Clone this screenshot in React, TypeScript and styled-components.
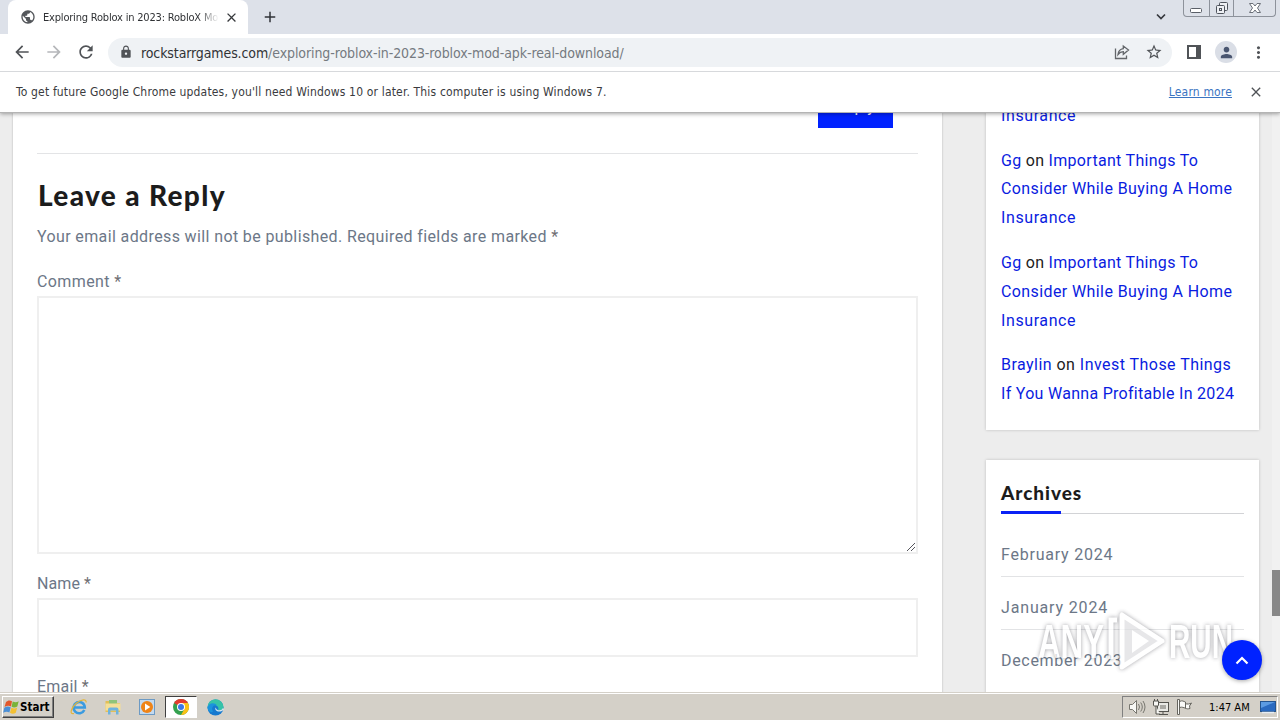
import React from "react";
import styled, { createGlobalStyle } from "styled-components";
import {
  MdAdd,
  MdArrowBack,
  MdArrowForward,
  MdClose,
  MdLock,
  MdMoreVert,
  MdPerson,
  MdPublic,
  MdRefresh,
  MdStarBorder,
} from "react-icons/md";

const GlobalStyle = createGlobalStyle`
  * {
    box-sizing: border-box;
  }
  body {
    margin: 0;
    overflow: hidden;
    background: #ededed;
  }
  svg {
    display: block;
    flex-shrink: 0;
  }
`;

const Screen = styled.div`
  position: relative;
  display: flex;
  flex-direction: column;
  width: 1280px;
  height: 720px;
  overflow: hidden;
  font-family: "Roboto", sans-serif;
`;

/* browser chrome */

const Chrome = styled.header`
  position: relative;
  z-index: 1;
  flex-shrink: 0;
  height: 113px;
  background: #fff;
  border-bottom: 1px solid #b4b4b4;
  box-shadow: 0 1px 4px rgba(0, 0, 0, 0.35);
  font-family: "DejaVu Sans Condensed", "DejaVu Sans", sans-serif;
  color: #3a3b3e;
`;

const TabStrip = styled.div`
  display: flex;
  justify-content: space-between;
  height: 34px;
  background: #dde1e9;
`;

const TabLeft = styled.div`
  display: flex;
  align-items: center;
  padding-left: 8px;
`;

const Tab = styled.div`
  display: flex;
  align-items: center;
  width: 240px;
  height: 34px;
  padding: 0 8px 0 12px;
  background: #fff;
  border-radius: 8px 8px 0 0;
  color: #54575b;
`;

const TabTitle = styled.span`
  width: 175px;
  margin: 1px 6px 0 7px;
  overflow: hidden;
  white-space: nowrap;
  font-size: 11px;
  line-height: 16px;
  letter-spacing: -0.19px;
  color: #303235;
  mask-image: linear-gradient(to right, #000 155px, transparent 176px);
`;

const NewTab = styled.div`
  margin-left: 13px;
  color: #303338;
`;

const TabRight = styled.div`
  display: flex;
  align-items: flex-start;
  padding-right: 4px;
`;

const TabSearch = styled.div`
  margin: 12px 16px 0 0;
`;

const WindowButtons = styled.div`
  display: flex;
  width: 93px;
  height: 17px;
  border: 1px solid #8d929b;
  border-top: 0;
  border-radius: 0 0 4px 4px;
`;

const WindowButton = styled.div<{ $width: number }>`
  display: flex;
  justify-content: center;
  width: ${(props) => props.$width}px;
  height: 16px;
  & + & {
    border-left: 1px solid #8d929b;
  }
`;

const Toolbar = styled.div`
  display: flex;
  align-items: center;
  height: 38px;
  padding: 0 12px 1px 12px;
  border-bottom: 1px solid #d7d9dc;
  color: #505357;
`;

const NavButton = styled.div<{ $faded?: boolean }>`
  width: 18px;
  margin-right: 14px;
  color: ${(props) => (props.$faded ? "#b5b7ba" : "#505357")};
`;

const Omnibox = styled.div`
  display: flex;
  align-items: center;
  flex-shrink: 0;
  width: 1064px;
  height: 29px;
  padding: 0 9px 0 11px;
  border-radius: 15px;
  background: #eff2f5;
`;

const Url = styled.span`
  flex: 1;
  margin: 1px 0 0 8px;
  font-size: 14px;
  line-height: 20px;
  letter-spacing: -0.09px;
  color: #757a80;
`;

const Host = styled.span`
  color: #313336;
  letter-spacing: -0.11px;
`;

const OmniboxActions = styled.div`
  display: flex;
  align-items: center;
  gap: 15px;
`;

const PanelButton = styled.div`
  margin-left: 15px;
`;

const Avatar = styled.div`
  display: flex;
  align-items: center;
  justify-content: center;
  flex-shrink: 0;
  width: 22px;
  height: 22px;
  margin: 0 12px 0 14px;
  border-radius: 50%;
  background: #dadee6;
  color: #4a5670;
`;

const InfoBar = styled.div`
  display: flex;
  align-items: center;
  height: 40px;
  padding: 0 16px;
  font-size: 12px;
  letter-spacing: 0.165px;
`;

const LearnMore = styled.a`
  margin-left: auto;
  margin-right: 16px;
  color: #3b74c2;
  text-decoration: underline;
`;

/* page */

const Page = styled.main`
  display: flex;
  flex: 1;
  min-height: 0;
  overflow: hidden;
  padding-left: 13px;
  background: #ededed;
`;

const Article = styled.section`
  width: 929px;
  height: 620px;
  margin-right: 44px;
  padding: 0 24px;
  background: #fff;
  box-shadow: 0 0 2px rgba(0, 0, 0, 0.25);
`;

const ReplyRow = styled.div`
  display: flex;
  align-items: flex-end;
  justify-content: flex-end;
  height: 15px;
  overflow: hidden;
  padding-right: 25px;
`;

const ReplyButton = styled.div`
  flex-shrink: 0;
  width: 75px;
  height: 42px;
  background: #0022ff;
  color: #fff;
  font-size: 16px;
  line-height: 41px;
  text-align: center;
`;

const Rule = styled.div`
  height: 1px;
  margin: 25px 0 24px;
  background: #e3e4e6;
`;

const Heading = styled.h3`
  margin: 0 0 11px 1px;
  font: 900 28px/34px "Lato", sans-serif;
  letter-spacing: 1.35px;
  color: #1c1c1c;
`;

const Text = styled.div<{ $spacing: number }>`
  font-size: 16px;
  line-height: 28.8px;
  letter-spacing: ${(props) => props.$spacing}px;
  white-space: nowrap;
  color: #6c7787;
`;

const Notes = styled(Text)`
  margin-bottom: 16px;
`;

const Star = styled.span`
  color: #6f6f73;
`;

const Field = styled.div<{ $height: number }>`
  display: flex;
  align-items: flex-end;
  justify-content: flex-end;
  height: ${(props) => props.$height}px;
  margin: -0.5px 0 16px;
  border: 2px solid #efefef;
  background: #fff;
`;

const Sidebar = styled.aside`
  display: flex;
  flex-direction: column;
  gap: 30px;
  width: 273px;
`;

const Widget = styled.div<{ $height: number }>`
  flex-shrink: 0;
  height: ${(props) => props.$height}px;
  padding: 0 15px;
  background: #fff;
  box-shadow: 0 0 3px rgba(0, 0, 0, 0.2);
`;

const CutLine = styled.div`
  display: flex;
  align-items: flex-end;
  height: 17.6px;
  margin-bottom: 16px;
  overflow: hidden;
`;

const Comment = styled.div`
  margin-bottom: 16px;
`;

const Line = styled.div<{ $spacing: number }>`
  flex-shrink: 0;
  font-size: 16px;
  line-height: 28.8px;
  letter-spacing: ${(props) => props.$spacing}px;
  white-space: nowrap;
  color: #0a1ce0;
`;

const On = styled.span`
  color: #212121;
`;

const WidgetTitle = styled.h6`
  margin: 0;
  padding-top: 21px;
  height: 51px;
  font: 900 19px/23px "Lato", sans-serif;
  letter-spacing: 0.95px;
  color: #1c1c1c;
`;

const TitleBar = styled.div`
  display: flex;
  align-items: center;
  width: 243px;
  height: 3px;
  margin-bottom: 27px;
`;

const TitleAccent = styled.div`
  width: 60px;
  height: 3px;
  background: #0a22f5;
`;

const TitleLine = styled.div`
  flex: 1;
  height: 1px;
  margin-top: 2px;
  background: #d2d3d6;
`;

const ArchiveItem = styled.div<{ $spacing: number }>`
  height: 53px;
  font-size: 16px;
  line-height: 28.8px;
  letter-spacing: ${(props) => props.$spacing}px;
  color: #6c7787;
  &:not(:last-child)::after {
    content: "";
    display: block;
    height: 1px;
    margin-top: 6px;
    background: #e2e3e5;
  }
`;

const Scrollbar = styled.div`
  width: 8px;
  margin-left: auto;
  padding-top: 457px;
  background: #f1f1f1;
`;

const Thumb = styled.div`
  height: 46px;
  background: #888;
`;

const ToTop = styled.div`
  position: absolute;
  left: 1222px;
  top: 640px;
  display: flex;
  align-items: center;
  justify-content: center;
  width: 40px;
  height: 40px;
  border-radius: 50%;
  background: #0022ff;
  box-shadow: 0 1px 4px rgba(0, 0, 0, 0.35);
`;

const Watermark = styled.div`
  position: absolute;
  left: 1038px;
  top: 608px;
  filter: drop-shadow(0 0 2px rgba(50, 50, 60, 0.6));
  opacity: 0.75;
`;

/* taskbar */

const Taskbar = styled.footer`
  position: relative;
  z-index: 2;
  display: flex;
  align-items: center;
  flex-shrink: 0;
  height: 28px;
  padding: 2px 2px 0;
  background: #d4d0c8;
  box-shadow: inset 0 1px #d4d0c8, inset 0 2px #fff;
  font-family: "DejaVu Sans Condensed", "DejaVu Sans", sans-serif;
  color: #000;
`;

const StartButton = styled.div`
  display: flex;
  align-items: center;
  width: 52px;
  height: 22px;
  margin-right: 9px;
  border: 1px solid;
  border-color: #fff #404040 #404040 #fff;
  box-shadow: inset -1px -1px #808080;
  font-size: 11.5px;
  font-weight: 700;
`;

const Task = styled.div<{ $active?: boolean }>`
  display: flex;
  align-items: center;
  justify-content: center;
  width: 32px;
  height: 22px;
  margin-right: 2px;
  border: 1px solid;
  border-color: ${(props) =>
    props.$active ? "#404040 #fff #fff #404040" : "transparent"};
  background: ${(props) => (props.$active ? "#fff" : "transparent")};
`;

const Tray = styled.div`
  display: flex;
  align-items: center;
  width: 156px;
  height: 22px;
  margin-left: auto;
  padding-left: 5px;
  border: 1px solid;
  border-color: #808080 #fff #fff #808080;
`;

const TrayIcons = styled.div`
  display: flex;
  align-items: center;
  gap: 6px;
`;

const Clock = styled.span`
  width: 42px;
  margin: 0 9px 0 16px;
  font-size: 11px;
  white-space: nowrap;
`;

const ShareIcon = () => (
  <svg width="16" height="16" viewBox="0 0 16 16" fill="none" stroke="#63666a" strokeWidth="1.300">
    <path d="M1.500 4.500v10h11v-3" />
    <path d="M9.300 2v2.600C6 5 4.400 7.200 4 10.500c1.500-2 3-2.800 5.300-2.800v2.600L14.500 6z" />
  </svg>
);

const FlagIcon = () => (
  <svg width="17" height="18" viewBox="1.500 1 16 18">
    <path d="M4 5c2-2 4-2 6-.7L9 9.500C7 8.300 5 8.500 2.500 10z" fill="#e2582c" />
    <path d="M10.700 4.500c2 1.200 4 1 6-.2l-1.400 5.300c-2 1.100-4 1.200-5.700.2z" fill="#79b33a" />
    <path d="M2.300 10.700c2.200-1.500 4.200-1.600 6.400-.4l-1.300 5.200c-2-1.200-4-1-6.200.3z" fill="#4b8fd6" />
    <path d="M9.400 10.700c2 1.100 3.900 1 5.800-.1l-1.400 5.200c-2 1.200-4 1.100-5.800 0z" fill="#f3c033" />
  </svg>
);

const IeIcon = () => (
  <svg width="18" height="18" viewBox="0 0 18 18" fill="none">
    <path d="M14.300 12a5.600 5.600 0 1 1 .5-2.500H4.500" stroke="#3b9be0" strokeWidth="2.600" />
    <path d="M4 15.500C-1 17 1 10 6 5.500S17 .5 16 4.500" stroke="#e3b53a" strokeWidth="1.200" />
  </svg>
);

const FolderIcon = () => (
  <svg width="18" height="18" viewBox="0 0 18 18">
    <path d="M1.500 3h5l1 2h8.500v9H1.500z" fill="#e2bf58" />
    <path d="M5 2h8v4H5z" fill="#8fc479" />
    <path d="M1.500 5.500h15v7h-15z" fill="#f4df98" />
    <path d="M4 16.500v-5q0-2 2-2h6.500q2 0 2 2v5H12v-4H6.500v4z" fill="#6eb3de" />
  </svg>
);

const PlayerIcon = () => (
  <svg width="18" height="18" viewBox="0 0 18 18">
    <rect x="1.500" y="1.500" width="15" height="15" fill="#c3daf0" stroke="#6c9ac4" />
    <circle cx="9" cy="9" r="6" fill="#ef8418" />
    <path d="M7 5.500 12.300 9 7 12.500z" fill="#fff" />
  </svg>
);

const ChromeIcon = () => (
  <svg width="16" height="16" viewBox="0 0 16 16">
    <circle cx="8" cy="8" r="8" fill="#34a14f" />
    <path d="M8 8 1.070 4A8 8 0 0 1 14.930 4z" fill="#e33b2e" />
    <path d="M8 8V4h6.930A8 8 0 0 1 8 16l3.460-6z" fill="#fbc116" />
    <circle cx="8" cy="8" r="4" fill="#fff" />
    <circle cx="8" cy="8" r="3" fill="#3b78e7" />
  </svg>
);

const EdgeIcon = () => (
  <svg width="17" height="17" viewBox="0 0 17 17">
    <circle cx="8.500" cy="8.500" r="8" fill="#1679cf" />
    <path d="M.5 8.500A8 8 0 0 1 16.500 8c.2 3-2.500 4-5.500 3.300 1.500-3-1-5.300-4-5.300C4 6 1.500 7 .5 8.500z" fill="#36c3a8" />
    <path d="M.5 8.500C1.500 3.500 8 3 10 6.500 6 5.500 4 9 6 12.500c-1.500 2-5.500-.5-5.500-4z" fill="#1b93dd" />
    <path d="M8.500 8.500c-1 3 2 5 6.500 3.500l2-1.500-1-1.500q-1 2.500-4.500 2.200Q9.500 11 8.500 8.500z" fill="#d4e6f0" />
  </svg>
);

const SpeakerIcon = () => (
  <svg width="18" height="16" viewBox="0 0 18 16" fill="none" stroke="#77766f">
    <path d="M1.500 5.500h3l4-4v13l-4-4h-3z" fill="#f7f7f4" />
    <path d="M10.500 5q2 3 0 6M12.700 3.500q3.200 4.500 0 9M15 2q4 6 0 12" />
  </svg>
);

const NetworkIcon = () => (
  <svg width="18" height="17" viewBox="0 0 18 17" fill="none" stroke="#55544f">
    <rect x="5.500" y="3.500" width="11" height="9" fill="#e9e9e5" />
    <path d="M8 6h6v4H8z" fill="#aaa9a4" stroke="none" />
    <path d="M7 15.500h9M11 13v2" />
    <path d="M1.500 2v4q0 1 1 1h3q1 0 1-1V2zM2.500 0v2M5.500 0v2M4 7v8h4" fill="#f7f7f4" />
  </svg>
);

const ActionFlagIcon = () => (
  <svg width="17" height="16" viewBox="0 0 17 16" fill="#fafaf8" stroke="#66655f">
    <path d="M9 4.500c2.500 1 4.500.5 6.500-.5l-2 3 .5 2.500c-2 .5-3 .5-5-.5" />
    <path d="M3.500 2.500c3-1.500 4 0 6 .5v6c-2 0-3-1.500-6-.5z" />
    <path d="M1.500.5h2v15h-2z" />
  </svg>
);

const DesktopIcon = () => (
  <svg width="16" height="14" viewBox="0 0 16 14">
    <rect x=".5" y="1.500" width="15" height="10" fill="#2a6ac0" stroke="#24548f" />
    <path d="M1 2h14L1 8z" fill="#5c9be2" />
    <path d="M2 12.500h12" stroke="#e6edf5" strokeWidth="1.500" />
  </svg>
);

const Logo = () => (
  <svg width="198" height="68" viewBox="0 0 198 68">
    <g
      fill="#fff"
      fontFamily="Liberation Sans Narrow, Liberation Sans, sans-serif"
      fontWeight="700"
      fontSize="48"
    >
      <text x="0" y="50" textLength="66" lengthAdjust="spacingAndGlyphs">ANY</text>
      <text x="131" y="50" textLength="64" lengthAdjust="spacingAndGlyphs">RUN</text>
    </g>
    <path d="M73 51V12h6" fill="none" stroke="#fff" strokeWidth="5" />
    <path d="M84 7v52l40-26z" fill="#dfdfe2" stroke="#fff" strokeWidth="5" strokeLinejoin="round" />
    <path d="m94 22 17 11-17 12z" fill="#fff" />
  </svg>
);

const insuranceComments = [0, 1];

const archives = [
  { label: "February 2024", spacing: 0.78 },
  { label: "January 2024", spacing: 0.84 },
  { label: "December 2023", spacing: 0.68 },
];

const App = () => {
  return (
    <Screen>
      <GlobalStyle />
      <Chrome>
        <TabStrip>
          <TabLeft>
            <Tab>
              <MdPublic size={16} />
              <TabTitle>Exploring Roblox in 2023: RobloX Mod</TabTitle>
              <MdClose size={15} color="#36383b" />
            </Tab>
            <NewTab>
              <MdAdd size={18} />
            </NewTab>
          </TabLeft>
          <TabRight>
            <TabSearch>
              <svg width="12" height="10" viewBox="0 0 12 10" fill="none" stroke="#36393e" strokeWidth="1.700">
                <path d="m2 2.500 4 4 4-4" />
              </svg>
            </TabSearch>
            <WindowButtons>
              <WindowButton $width={25}>
                <svg width="14" height="16" fill="#fff" stroke="#5a5f68">
                  <rect x="1.500" y="8.500" width="11" height="4" rx="1" />
                </svg>
              </WindowButton>
              <WindowButton $width={25}>
                <svg width="14" height="16" fill="#eef0f4" stroke="#4f545d">
                  <rect x="4.500" y="2.500" width="8" height="8" rx="1" />
                  <rect x="1.500" y="5.500" width="8" height="8" rx="1" />
                  <rect x="4.500" y="8.500" width="2" height="2" />
                </svg>
              </WindowButton>
              <WindowButton $width={42}>
                <svg width="14" height="16" fill="#fff" stroke="#6b7079">
                  <path d="M1.500 3.500h3.500l2 2.500 2-2.500h3.500L9.500 8l3 4.500H9L7 10l-2 2.500H1.500L4.500 8z" />
                </svg>
              </WindowButton>
            </WindowButtons>
          </TabRight>
        </TabStrip>
        <Toolbar>
          <NavButton>
            <MdArrowBack size={20} />
          </NavButton>
          <NavButton $faded>
            <MdArrowForward size={20} />
          </NavButton>
          <NavButton>
            <MdRefresh size={20} />
          </NavButton>
          <Omnibox>
            <MdLock size={14} />
            <Url>
              <Host>rockstarrgames.com</Host>
              /exploring-roblox-in-2023-roblox-mod-apk-real-download/
            </Url>
            <OmniboxActions>
              <ShareIcon />
              <MdStarBorder size={18} />
            </OmniboxActions>
          </Omnibox>
          <PanelButton>
            <svg width="14" height="14" viewBox="0 0 14 14">
              <path d="M0 0h14v14H0zM2 2v10h7V2z" fill="#505357" fillRule="evenodd" />
            </svg>
          </PanelButton>
          <Avatar>
            <MdPerson size={17} />
          </Avatar>
          <MdMoreVert size={19} />
        </Toolbar>
        <InfoBar>
          <span>
            To get future Google Chrome updates, you'll need Windows 10 or later. This computer is
            using Windows 7.
          </span>
          <LearnMore>Learn more</LearnMore>
          <MdClose size={16} color="#505357" />
        </InfoBar>
      </Chrome>

      <Page>
        <Article>
          <ReplyRow>
            <ReplyButton>Reply</ReplyButton>
          </ReplyRow>
          <Rule />
          <Heading>Leave a Reply</Heading>
          <Notes $spacing={0.38}>
            Your email address will not be published. Required fields are marked <Star>*</Star>
          </Notes>
          <Text $spacing={0.4}>
            Comment <Star>*</Star>
          </Text>
          <Field $height={257.5}>
            <svg width="10" height="10" stroke="#55555c" fill="none">
              <path d="m1 9 8-8M5 9l4-4" />
            </svg>
          </Field>
          <Text $spacing={0.1}>
            Name <Star>*</Star>
          </Text>
          <Field $height={59}>{null}</Field>
          <Text $spacing={0.2}>
            Email <Star>*</Star>
          </Text>
        </Article>

        <Sidebar>
          <Widget $height={317}>
            <CutLine>
              <Line $spacing={0.6}>Insurance</Line>
            </CutLine>
            {insuranceComments.map((id) => (
              <Comment key={id}>
                <Line $spacing={0.3}>
                  Gg <On>on</On> Important Things To
                </Line>
                <Line $spacing={0.4}>Consider While Buying A Home</Line>
                <Line $spacing={0.6}>Insurance</Line>
              </Comment>
            ))}
            <Comment>
              <Line $spacing={0.46}>
                Braylin <On>on</On> Invest Those Things
              </Line>
              <Line $spacing={0.29}>If You Wanna Profitable In 2024</Line>
            </Comment>
          </Widget>
          <Widget $height={300}>
            <WidgetTitle>Archives</WidgetTitle>
            <TitleBar>
              <TitleAccent />
              <TitleLine />
            </TitleBar>
            {archives.map((item) => (
              <ArchiveItem key={item.label} $spacing={item.spacing}>
                {item.label}
              </ArchiveItem>
            ))}
          </Widget>
        </Sidebar>

        <Scrollbar>
          <Thumb />
        </Scrollbar>
      </Page>

      <Watermark>
        <Logo />
      </Watermark>
      <ToTop>
        <svg width="14" height="10" viewBox="0 0 14 10" fill="none" stroke="#fff" strokeWidth="2.200">
          <path d="m1.500 8.500 5.500-5.500 5.500 5.500" />
        </svg>
      </ToTop>

      <Taskbar>
        <StartButton>
          <FlagIcon />
          Start
        </StartButton>
        <Task>
          <IeIcon />
        </Task>
        <Task>
          <FolderIcon />
        </Task>
        <Task>
          <PlayerIcon />
        </Task>
        <Task $active>
          <ChromeIcon />
        </Task>
        <Task>
          <EdgeIcon />
        </Task>
        <Tray>
          <TrayIcons>
            <SpeakerIcon />
            <NetworkIcon />
            <ActionFlagIcon />
          </TrayIcons>
          <Clock>1:47 AM</Clock>
          <DesktopIcon />
        </Tray>
      </Taskbar>
    </Screen>
  );
};

export default App;
